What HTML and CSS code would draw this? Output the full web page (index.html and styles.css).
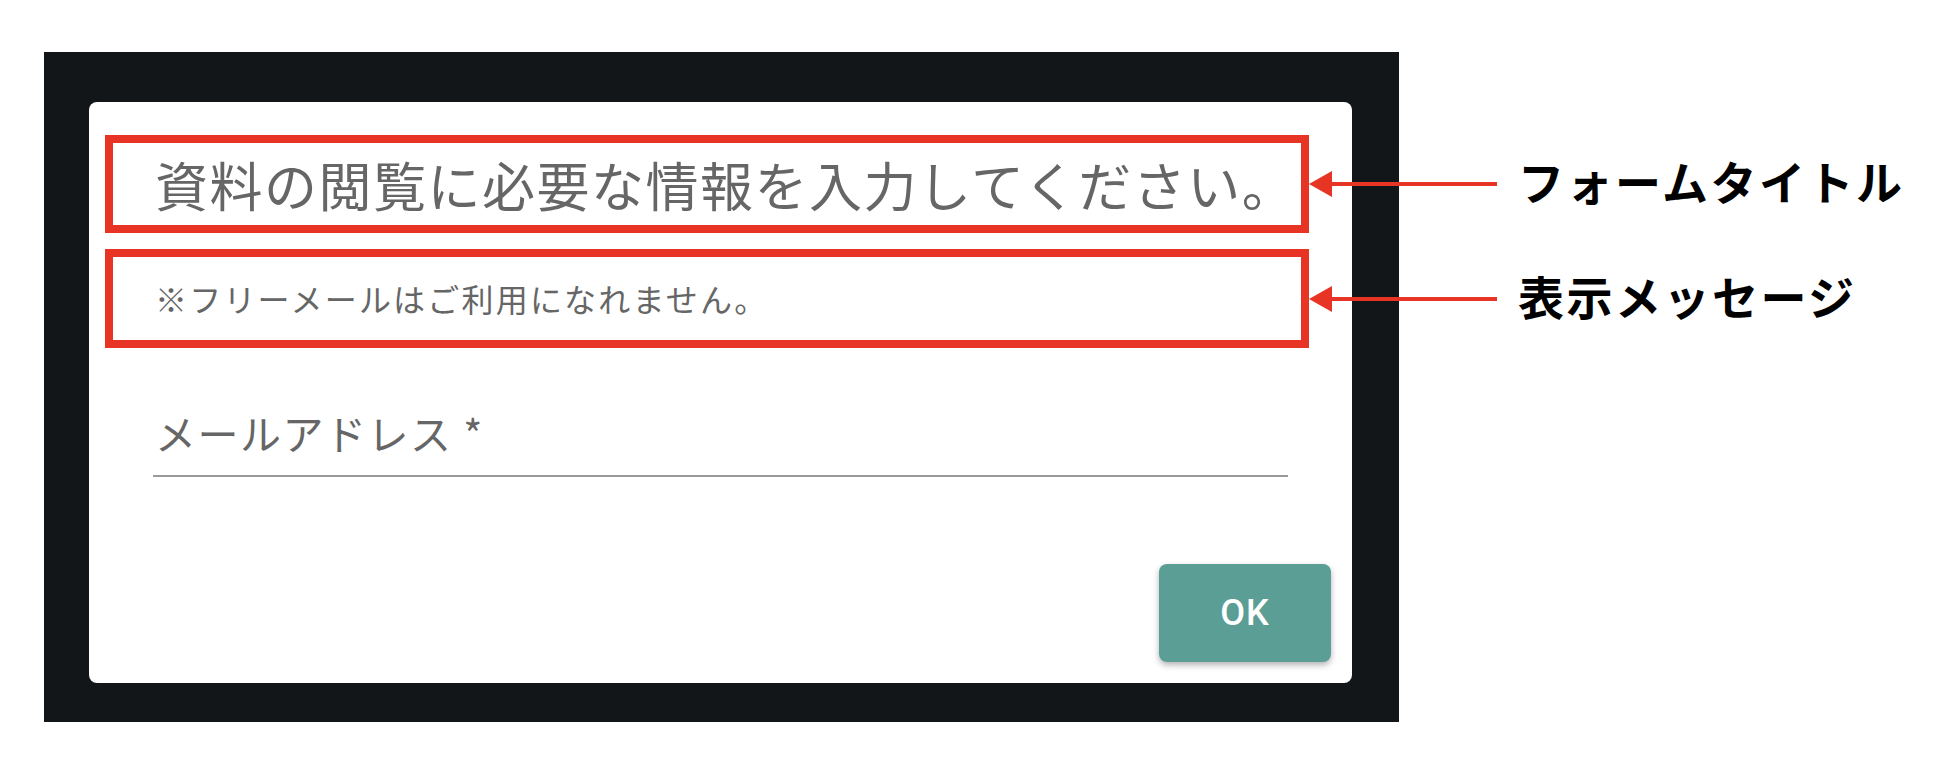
FILE: index.html
```html
<!DOCTYPE html>
<html lang="ja">
<head>
    <meta charset="UTF-8">
    <meta name="viewport" content="width=device-width, initial-scale=1.0">
    <title>フォーム設定</title>
    <link rel="stylesheet" href="styles.css">
</head>
<body>
    <div class="page">
        <div class="frame">
            <div class="card">
                <!-- Form title -->
                <div class="mark mark-title">
                    <h2 class="form-title">資料の閲覧に必要な情報を入力してください。</h2>
                    <div class="callout">
                        <svg class="arrow" width="188" height="26" viewBox="0 0 188 26">
                            <polygon points="0,13 23,0 23,26" fill="#e83424"/>
                            <rect x="22" y="11" width="166" height="4" fill="#e83424"/>
                        </svg>
                        <span class="callout-label">フォームタイトル</span>
                    </div>
                </div>

                <!-- Display message -->
                <div class="mark mark-message">
                    <p class="form-message">※フリーメールはご利用になれません。</p>
                    <div class="callout">
                        <svg class="arrow" width="188" height="26" viewBox="0 0 188 26">
                            <polygon points="0,13 23,0 23,26" fill="#e83424"/>
                            <rect x="22" y="11" width="166" height="4" fill="#e83424"/>
                        </svg>
                        <span class="callout-label">表示メッセージ</span>
                    </div>
                </div>

                <div class="field">
                    <label for="email">メールアドレス *</label>
                </div>

                <button class="ok-button">OK</button>
            </div>
        </div>
    </div>
</body>
</html>
```

FILE: styles.css
```css
body {
    margin: 0;
    padding: 0;
    background: #fff;
    font-family: "Noto Sans CJK JP", "Noto Sans", sans-serif;
}
.page {
    display: flex;
    padding: 52px 0 54px 44px;
}
.frame {
    width: 1355px;
    height: 670px;
    box-sizing: border-box;
    padding: 50px 47px 39px 45px;
    background: #131618;
}
.card {
    height: 100%;
    box-sizing: border-box;
    display: flex;
    flex-direction: column;
    padding: 33px 21px 21px 16px;
    background: #fff;
    border-radius: 8px;
}
.mark {
    position: relative;
    margin-right: 22px;
    border: 8px solid #e83424;
    padding-left: 42px;
}
.mark-title {
    height: 82px;
}
.mark-message {
    height: 83px;
    margin-top: 16px;
}
.form-title {
    margin: 0;
    font-size: 53px;
    font-weight: normal;
    letter-spacing: 1.5px;
    line-height: 82px;
    color: #666;
    white-space: nowrap;
}
.form-message {
    margin: 0;
    font-size: 32px;
    letter-spacing: 2.2px;
    line-height: 83px;
    color: #666;
    white-space: nowrap;
}
.callout {
    position: absolute;
    top: 50%;
    left: 100%;
    margin-left: 8px;
    transform: translateY(-50%);
    display: flex;
    align-items: center;
}
.arrow {
    display: block;
    flex-shrink: 0;
}
.callout-label {
    margin-left: 21px;
    margin-bottom: 8px;
    font-size: 46px;
    font-weight: bold;
    letter-spacing: 2.5px;
    color: #000;
    white-space: nowrap;
}
.field {
    margin: 56px 43px 0 48px;
    padding-bottom: 15px;
    border-bottom: 2px solid #999;
}
.field label {
    display: block;
    padding-left: 2px;
    font-size: 41px;
    letter-spacing: 1.5px;
    line-height: 56px;
    color: #666;
}
.ok-button {
    align-self: flex-end;
    margin-top: auto;
    width: 172px;
    height: 98px;
    border: none;
    border-radius: 8px;
    background-color: #5a9e96;
    color: #fff;
    font-family: Roboto, "Noto Sans", sans-serif;
    font-size: 36px;
    font-weight: 500;
    letter-spacing: 1px;
    box-shadow: 0 3px 6px rgba(0, 0, 0, 0.3);
    cursor: pointer;
}
```
